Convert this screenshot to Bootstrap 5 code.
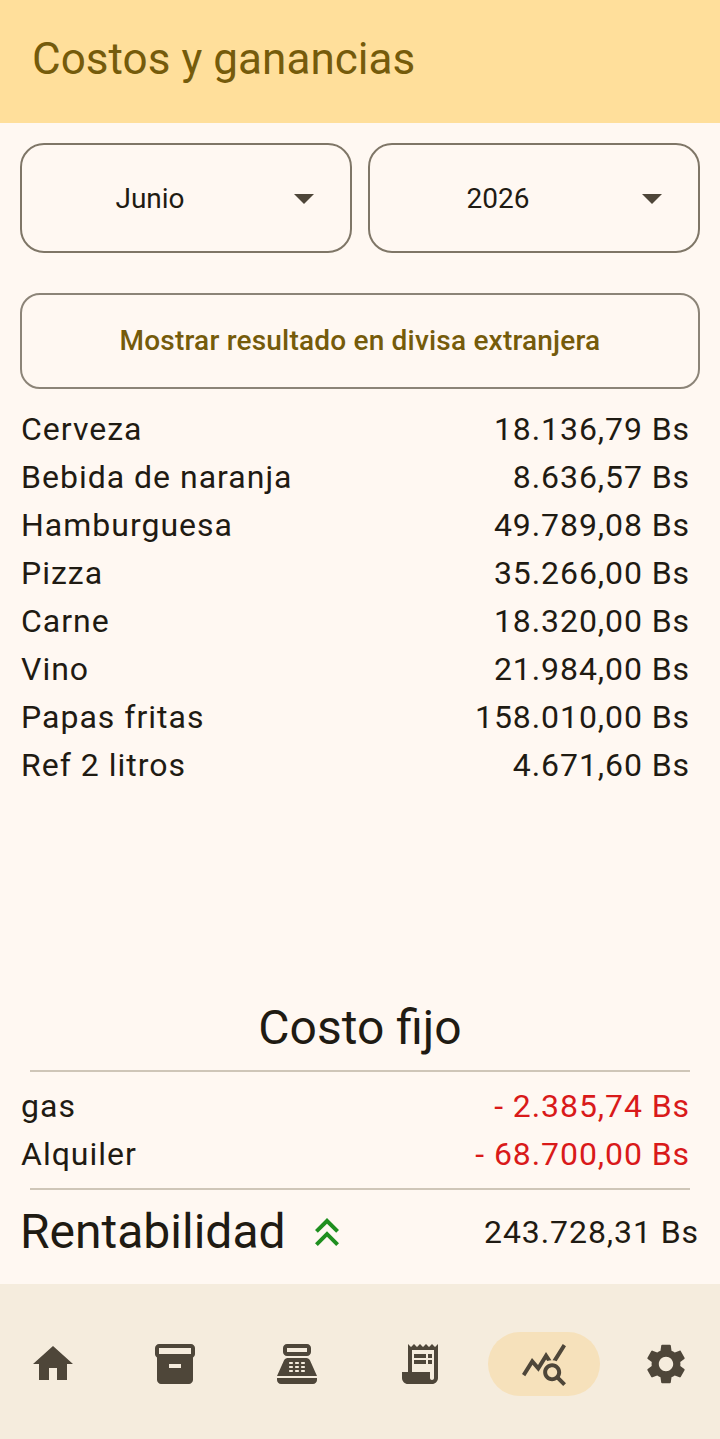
<!DOCTYPE html>
<html lang="es">
<head>
    <meta charset="UTF-8">
    <meta name="viewport" content="width=device-width, initial-scale=1.0">
    <title>Costos y ganancias</title>
    <link href="https://cdn.jsdelivr.net/npm/bootstrap@5.3.0/dist/css/bootstrap.min.css" rel="stylesheet">
    <style>
        body { background: #fff8f2; color: #1f1b13; font-family: Roboto, sans-serif; }
        .app-screen { height: 1439px; }
        .app-header { height: 123px; background: #ffdf9b; padding-left: 32px; padding-bottom: 4px; }
        .app-title { font-size: 44px; font-weight: 400; color: #755b0b; margin: 0; letter-spacing: .05px; }
        .picker-box { height: 110px; border: 2px solid #7f7667; border-radius: 24px; font-size: 28px; color: #1f1b13; padding: 0 22px 0 0; background: transparent; }
        .picker-box span { padding-top: 2px; }
        .picker-box svg { width: 48px; height: 48px; fill: #4e4639; flex: none; margin-left: 2px; }
        .picker-row { padding: 20px 20px 0; gap: 16px; }
        .divisa-btn { display: block; height: 96px; margin: 40px 20px 0; width: 680px; border: 2px solid #8c8478; border-radius: 20px; font-size: 28px; font-weight: 500; color: #755b0b; background: transparent; letter-spacing: .2px; }
        .line-list { padding: 16px 30px 0 21px; }
        .line-row { height: 48px; font-size: 32px; letter-spacing: 1px; line-height: 48px; }
        .line-row span + span { letter-spacing: .92px; }
        .money-neg { color: #d91a1a; }
        .lower-part { margin-top: auto; }
        .fijo-title { font-size: 48px; line-height: 64px; text-align: center; margin: 0; font-weight: 400; }
        .soft-line { height: 2px; background: #cfc6b8; margin: 10px 30px; }
        .renta-row { height: 64px; padding: 0 21px 0 20px; margin-bottom: 20px; }
        .renta-name { font-size: 48px; line-height: 64px; }
        .renta-icon { width: 48px; height: 48px; fill: #1f8f1f; margin-left: 17px; }
        .renta-amount { font-size: 32px; letter-spacing: .92px; margin-left: auto; }
        .bottom-bar { height: 155px; background: #f5ecdd; padding: 5px 30px 0 29px; }
        .bottom-bar svg { width: 48px; height: 48px; fill: #4e4639; display: block; }
        .bottom-bar .tab-nudge { margin: 0 1px 0 -1px; }
        .tab-active { background: #f6e1bb; border-radius: 32px; padding: 8px 32px; margin: -8px -33px -8px -31px; }
    </style>
</head>
<body>
    <div class="app-screen d-flex flex-column">
        <div class="app-header d-flex align-items-center">
            <h1 class="app-title">Costos y ganancias</h1>
        </div>

        <!-- filters -->
        <div class="picker-row d-flex">
            <button type="button" class="picker-box btn d-flex align-items-center flex-fill w-50">
                <span class="flex-fill text-center">Junio</span>
                <svg viewBox="0 0 24 24"><path d="M7 10l5 5 5-5z"/></svg>
            </button>
            <button type="button" class="picker-box btn d-flex align-items-center flex-fill w-50">
                <span class="flex-fill text-center">2026</span>
                <svg viewBox="0 0 24 24"><path d="M7 10l5 5 5-5z"/></svg>
            </button>
        </div>
        <button type="button" class="divisa-btn btn">Mostrar resultado en divisa extranjera</button>

        <!-- products -->
        <div class="line-list">
            <div class="line-row d-flex justify-content-between"><span>Cerveza</span><span>18.136,79 Bs</span></div>
            <div class="line-row d-flex justify-content-between"><span>Bebida de naranja</span><span>8.636,57 Bs</span></div>
            <div class="line-row d-flex justify-content-between"><span>Hamburguesa</span><span>49.789,08 Bs</span></div>
            <div class="line-row d-flex justify-content-between"><span>Pizza</span><span>35.266,00 Bs</span></div>
            <div class="line-row d-flex justify-content-between"><span>Carne</span><span>18.320,00 Bs</span></div>
            <div class="line-row d-flex justify-content-between"><span>Vino</span><span>21.984,00 Bs</span></div>
            <div class="line-row d-flex justify-content-between"><span>Papas fritas</span><span>158.010,00 Bs</span></div>
            <div class="line-row d-flex justify-content-between"><span>Ref 2 litros</span><span>4.671,60 Bs</span></div>
        </div>

        <div class="lower-part">
            <h2 class="fijo-title">Costo fijo</h2>
            <div class="soft-line"></div>
            <div class="line-list pt-0">
                <div class="line-row d-flex justify-content-between"><span>gas</span><span class="money-neg">- 2.385,74 Bs</span></div>
                <div class="line-row d-flex justify-content-between"><span>Alquiler</span><span class="money-neg">- 68.700,00 Bs</span></div>
            </div>
            <div class="soft-line"></div>
            <div class="renta-row d-flex align-items-center">
                <span class="renta-name">Rentabilidad</span>
                <svg class="renta-icon" viewBox="0 0 24 24"><path d="M6 17.59L7.41 19 12 14.42 16.59 19 18 17.59l-6-6z"/><path d="M6 11L7.41 12.41 12 7.83l4.59 4.58L18 11l-6-6z"/></svg>
                <span class="renta-amount">243.728,31 Bs</span>
            </div>
        </div>

        <!-- bottom nav -->
        <nav class="bottom-bar d-flex justify-content-between align-items-center">
            <svg viewBox="0 0 24 24"><path d="M10 20v-6h4v6h5v-8h3L12 3 2 12h3v8z"/></svg>
            <svg class="tab-nudge" viewBox="0 0 24 24"><path d="M20 2H4c-1 0-2 .9-2 2v3.01c0 .72.43 1.34 1 1.69V20c0 1.1 1.1 2 2 2h14c.9 0 2-.9 2-2V8.7c.57-.35 1-.97 1-1.69V4c0-1.1-1-2-2-2zm-5 12H9v-2h6v2zm5-7H4V4l16-.02V7z"/></svg>
            <svg class="tab-nudge" viewBox="0 0 24 24"><path d="M17 2H7c-1.1 0-2 .9-2 2v2c0 1.1.9 2 2 2h10c1.1 0 2-.9 2-2V4c0-1.1-.9-2-2-2zm0 4H7V4h10v2zm3 16H4c-1.1 0-2-.9-2-2v-1h20v1c0 1.1-.9 2-2 2zm-1.47-11.81C18.21 9.47 17.49 9 16.7 9H7.3c-.79 0-1.51.47-1.83 1.19L2 18h20l-3.47-7.81zM9.5 16h-1c-.28 0-.5-.22-.5-.5s.22-.5.5-.5h1c.28 0 .5.22.5.5s-.22.5-.5.5zm0-2h-1c-.28 0-.5-.22-.5-.5s.22-.5.5-.5h1c.28 0 .5.22.5.5s-.22.5-.5.5zm0-2h-1c-.28 0-.5-.22-.5-.5s.22-.5.5-.5h1c.28 0 .5.22.5.5s-.22.5-.5.5zm3 4h-1c-.28 0-.5-.22-.5-.5s.22-.5.5-.5h1c.28 0 .5.22.5.5s-.22.5-.5.5zm0-2h-1c-.28 0-.5-.22-.5-.5s.22-.5.5-.5h1c.28 0 .5.22.5.5s-.22.5-.5.5zm0-2h-1c-.28 0-.5-.22-.5-.5s.22-.5.5-.5h1c.28 0 .5.22.5.5s-.22.5-.5.5zm3 4h-1c-.28 0-.5-.22-.5-.5s.22-.5.5-.5h1c.28 0 .5.22.5.5s-.22.5-.5.5zm0-2h-1c-.28 0-.5-.22-.5-.5s.22-.5.5-.5h1c.28 0 .5.22.5.5s-.22.5-.5.5zm0-2h-1c-.28 0-.5-.22-.5-.5s.22-.5.5-.5h1c.28 0 .5.22.5.5s-.22.5-.5.5z"/></svg>
            <svg class="tab-nudge" viewBox="0 0 24 24"><path d="M19.5 3.5L18 2l-1.5 1.5L15 2l-1.5 1.5L12 2l-1.5 1.5L9 2 7.5 3.5 6 2v14H3v3c0 1.66 1.34 3 3 3h12c1.66 0 3-1.34 3-3V2l-1.5 1.5zM19 19c0 .55-.45 1-1 1s-1-.45-1-1v-3H8V5h11v14z"/><path d="M9 7h6v2H9zM16 7h2v2h-2zM9 10h6v2H9zM16 10h2v2h-2z"/></svg>
            <div class="tab-active">
                <svg viewBox="0 0 24 24"><path d="M19.88 18.47c.44-.7.7-1.51.7-2.39 0-2.49-2.01-4.5-4.5-4.5s-4.5 2.01-4.5 4.5 2.01 4.5 4.5 4.5c.88 0 1.69-.26 2.39-.7L21.58 23 23 21.58l-3.12-3.11zm-3.8.11c-1.38 0-2.5-1.12-2.5-2.5s1.12-2.5 2.5-2.5 2.5 1.12 2.5 2.5-1.12 2.5-2.5 2.5zm-.36-8.5c-.74.02-1.45.18-2.1.45l-.55-.83-3.8 6.18-3.01-3.52-3.63 5.81L1 17l5-8 3 3.5L13 6l2.72 4.08zm2.59.5c-.64-.28-1.33-.45-2.05-.49L21.38 2 23 3.18l-4.69 7.4z"/></svg>
            </div>
            <svg viewBox="0 0 24 24"><path d="M19.14 12.94c.04-.3.06-.61.06-.94 0-.32-.02-.64-.07-.94l2.03-1.58c.18-.14.23-.41.12-.61l-1.92-3.32c-.12-.22-.37-.29-.59-.22l-2.39.96c-.5-.38-1.03-.7-1.62-.94l-.36-2.54c-.04-.24-.24-.41-.48-.41h-3.84c-.24 0-.43.17-.47.41l-.36 2.54c-.59.24-1.13.57-1.62.94l-2.39-.96c-.22-.08-.47 0-.59.22L2.74 8.87c-.12.21-.08.47.12.61l2.03 1.58c-.05.3-.09.63-.09.94s.02.64.07.94l-2.03 1.58c-.18.14-.23.41-.12.61l1.92 3.32c.12.22.37.29.59.22l2.39-.96c.5.38 1.03.7 1.62.94l.36 2.54c.05.24.24.41.48.41h3.84c.24 0 .44-.17.47-.41l.36-2.54c.59-.24 1.13-.56 1.62-.94l2.39.96c.22.08.47 0 .59-.22l1.92-3.32c.12-.22.07-.47-.12-.61l-2.01-1.58zM12 15.6c-1.98 0-3.6-1.62-3.6-3.6s1.62-3.6 3.6-3.6 3.6 1.62 3.6 3.6-1.62 3.6-3.6 3.6z"/></svg>
        </nav>
    </div>
    <script src="https://cdn.jsdelivr.net/npm/bootstrap@5.3.0/dist/js/bootstrap.bundle.min.js"></script>
</body>
</html>
